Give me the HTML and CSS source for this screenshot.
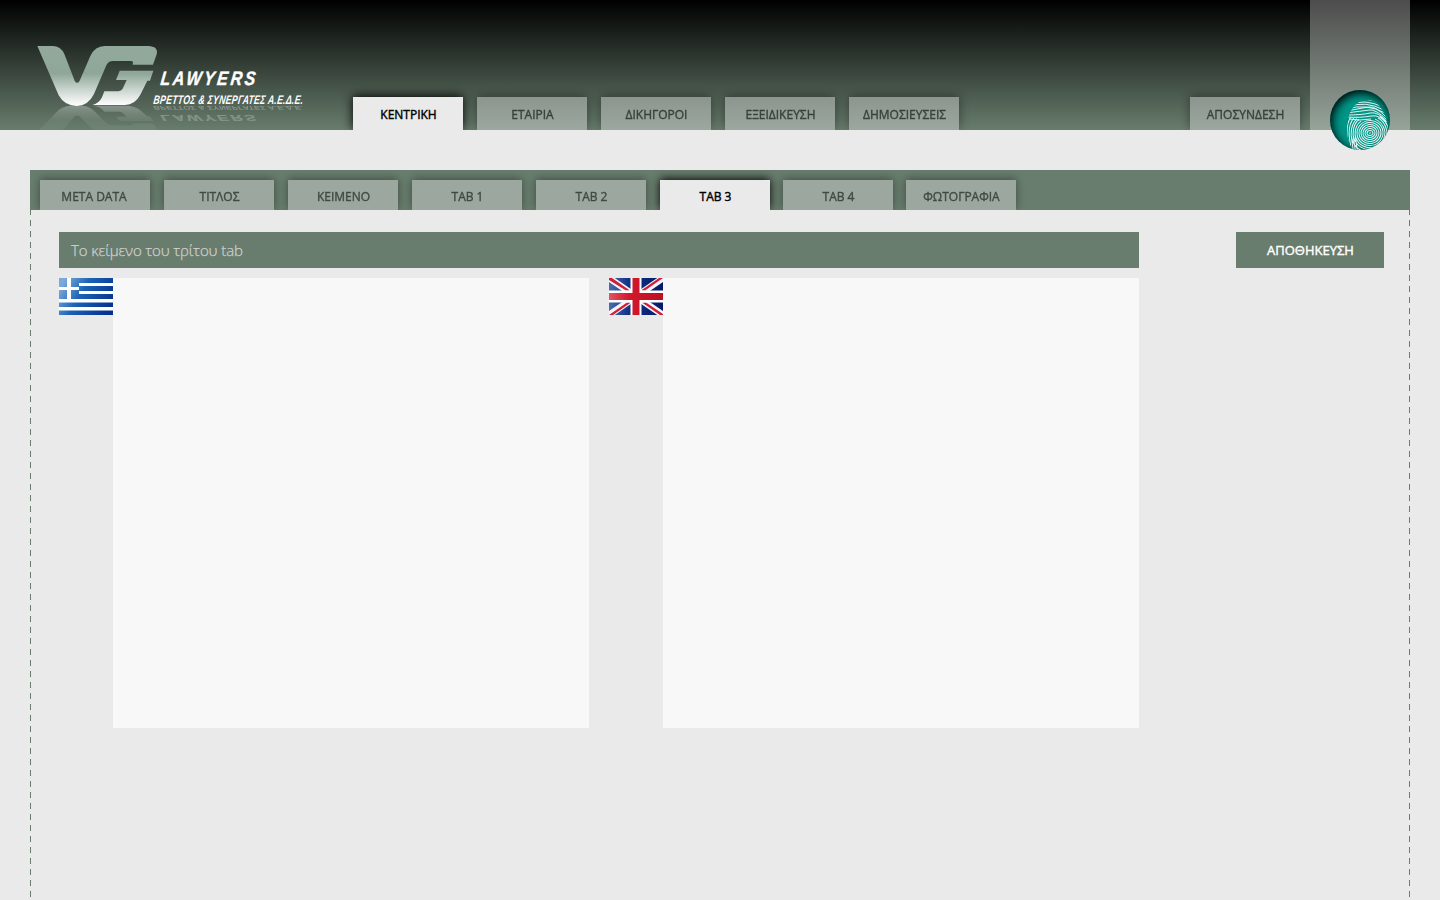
FILE: index.html
```html
<!DOCTYPE html>
<html lang="el">
<head>
<meta charset="utf-8">
<title>VG Lawyers</title>
<link rel="stylesheet" href="styles.css">
</head>
<body>
<header class="header">
  <svg class="logo" width="310" height="130" viewBox="0 0 310 130">
    <defs>
      <linearGradient id="metal" gradientUnits="userSpaceOnUse" x1="0" y1="30" x2="0" y2="210">
        <stop offset="0" stop-color="#92a99c"/><stop offset=".46" stop-color="#8fa799"/><stop offset=".62" stop-color="#b3c3b9"/><stop offset=".85" stop-color="#e3e8e5"/><stop offset="1" stop-color="#fff"/>
      </linearGradient>
      <linearGradient id="fade" gradientUnits="userSpaceOnUse" x1="0" y1="106" x2="0" y2="130">
        <stop offset="0" stop-color="#fff" stop-opacity=".3"/><stop offset="1" stop-color="#fff" stop-opacity=".16"/>
      </linearGradient>
      <mask id="mirror" maskUnits="userSpaceOnUse" x="0" y="104" width="310" height="26"><path fill="url(#fade)" d="M0 104H310V130H0Z"/></mask>
      <g id="mark" fill="#fff">
        <g fill="url(#metal)" transform="translate(30 36) scale(.33333)">
          <path d="M22 30H68Q92 30 103 54L134 134Q141 147 149 134L181 60Q195 30 224 30H354Q386 31 380 55L369 86H308L309 78Q308 75 302 75H249Q235 75 229 88L192 174Q174 210 140 210Q103 209 86 178Z"/>
          <path d="M269 104H370L360 134H352L331 176Q315 206 285 207H188Q208 201 216 184L223 166H265Q274 165 278 158L290 132H258Z"/>
        </g>
        <g class="logo-text">
          <text transform="translate(160 85) skewX(-7) scale(.82 1)" font-size="19.500" textLength="115.500" lengthAdjust="spacing" stroke="#fff" stroke-width=".4">LAWYERS</text>
          <text transform="translate(153 104) skewX(-7) scale(.7 1)" font-size="12.500" textLength="214" lengthAdjust="spacing">ΒΡΕΤΤΟΣ &amp; ΣΥΝΕΡΓΑΤΕΣ Α.Ε.Δ.Ε.</text>
        </g>
      </g>
    </defs>
    <use href="#mark"/>
    <g mask="url(#mirror)"><use href="#mark" transform="translate(0 152) scale(1 -.44)"/></g>
  </svg>
  <nav class="main-nav">
    <a class="tab active">ΚΕΝΤΡΙΚΗ</a><a class="tab">ΕΤΑΙΡΙΑ</a><a class="tab">ΔΙΚΗΓΟΡΟΙ</a><a class="tab">ΕΞΕΙΔΙΚΕΥΣΗ</a><a class="tab">ΔΗΜΟΣΙΕΥΣΕΙΣ</a>
  </nav>
  <nav class="user-nav"><a class="tab">ΑΠΟΣΥΝΔΕΣΗ</a></nav>
  <div class="user-strip">
    <div class="badge">
      <svg width="60" height="60" viewBox="0 0 60 60">
        <clipPath id="finger"><path d="M17 40C17 23 24 10 38 10C49 10 57 25 58 39Q57 47 53 52Q44 62 23 60Q17 51 17 40Z"/></clipPath>
        <clipPath id="disc"><circle cx="30" cy="30" r="30"/></clipPath>
        <g clip-path="url(#disc)"><g clip-path="url(#finger)" fill="none" stroke="#e6f5f3" stroke-width="1">
          <path d="M20 13Q35 5 51 14M19 15Q34 8 53 17M18 17Q35 10 54 20M17 19Q36 13 55 23M17 21Q32 18 39 17T56 27M16 23Q32 21 39 20T57 30M16 25Q32 25 40 23T58 33M16 27Q31 28 41 26T58 36M19 29Q30 31 41 29"/>
          <g transform="rotate(-8 40 43)"><path d="M39 43h2"/><ellipse cx="40" cy="43" rx="3" ry="2.500"/><ellipse cx="40" cy="43" rx="5" ry="4.500"/><ellipse cx="40" cy="43" rx="7" ry="6.500"/><ellipse cx="40" cy="43" rx="9" ry="8.500"/><ellipse cx="40" cy="43" rx="11" ry="10.500"/><ellipse cx="40" cy="43" rx="13" ry="12.500"/>
          <path d="M25 64V43Q26 33 33 30M23 64V43Q24 32 31 28M21 64V43Q22 32 29 27M19 64V43Q20 31 26 26M17 64V43Q18 30 23 25M25 43Q26 56 40 58Q54 56 55 43Q54 34 47 30M23 43Q24 58 40 60Q56 58 57 43Q56 33 50 29M21 44Q22 61 40 62M59 50V43Q58 32 52 28"/></g>
        </g></g>
      </svg>
    </div>
  </div>
</header>
<main class="panel">
  <nav class="sub-nav">
    <a class="tab latin">META DATA</a><a class="tab">ΤΙΤΛΟΣ</a><a class="tab">ΚΕΙΜΕΝΟ</a><a class="tab">TAB 1</a><a class="tab">TAB 2</a><a class="tab active">TAB 3</a><a class="tab tight">TAB 4</a><a class="tab tight">ΦΩΤΟΓΡΑΦΙΑ</a>
  </nav>
  <div class="content">
    <section class="editor">
      <h1 class="title">Το κείμενο του τρίτου tab</h1>
      <div class="fields">
        <div class="field">
          <svg width="54" height="37" viewBox="0 0 54 37">
            <defs><linearGradient id="aegean" x1="0" y1=".3" x2="1" y2=".7"><stop stop-color="#7ba9dc"/><stop offset=".4" stop-color="#1b62b5"/><stop offset="1" stop-color="#06318f"/></linearGradient></defs>
            <path fill="url(#aegean)" d="M0 0H54V37H0Z"/>
            <path fill="#fff" d="M20 5H54V8H20ZM20 13H54V16H20ZM0 21H54V24.500H0ZM0 29H54V32.500H0ZM8 0H12V21H8ZM0 9H20V12H0Z"/>
          </svg>
          <div class="textarea"></div>
        </div>
        <div class="field">
          <svg width="54" height="37" viewBox="0 0 54 37">
            <defs><linearGradient id="navy"><stop stop-color="#4a6db0"/><stop offset=".35" stop-color="#123488"/><stop offset="1" stop-color="#051a66"/></linearGradient>
            <linearGradient id="red"><stop stop-color="#df5663"/><stop offset=".35" stop-color="#d3192e"/><stop offset="1" stop-color="#bd1022"/></linearGradient></defs>
            <path fill="url(#navy)" d="M0 0H54V37H0Z"/>
            <path stroke="#f4f4f8" stroke-width="6.500" d="M0 0L54 37M0 37L54 0"/>
            <path fill="#ce2036" d="M0 0H3L21 12.500H17L0 2ZM50 0H54L36 12.500H32ZM18 24.500H22L4 37H0ZM33 24.500H37L54 36V37H51Z"/>
            <path fill="#fff" d="M21.500 0H32.500V37H21.500ZM0 12.500H54V24.500H0Z"/>
            <path fill="url(#red)" d="M0 15H23.500V0H30.500V15H54V22H30.500V37H23.500V22H0Z"/>
          </svg>
          <div class="textarea"></div>
        </div>
      </div>
    </section>
    <button class="save">ΑΠΟΘΗΚΕΥΣΗ</button>
  </div>
</main>
</body>
</html>
```
FILE: styles.css
```css
* { box-sizing: border-box; }
body {
  margin: 0;
  height: 900px;
  overflow: hidden;
  background: #eaeaea;
  font-family: "Open Sans", sans-serif;
}
.header {
  height: 130px;
  display: flex;
  align-items: flex-end;
  padding-right: 30px;
  background: linear-gradient(#000, #687d6d);
}
.logo { display: block; flex: none; }
.logo-text { font-family: "Liberation Sans", sans-serif; font-weight: bold; font-style: italic; }
.main-nav, .user-nav, .sub-nav { display: flex; overflow: hidden; align-items: flex-end; }
.main-nav, .user-nav { height: 50px; }
.main-nav { padding: 0 12px; margin-left: 31px; gap: 14px; }
.user-nav { margin-left: auto; padding: 0 10px; }
.tab {
  width: 110px;
  height: 33px;
  flex: none;
  padding-left: 1px;
  line-height: 36px;
  text-align: center;
  font-size: 12px;
  font-weight: 400;
  -webkit-text-stroke: .4px #000;
  color: #000;
  background: #eaeaea;
  box-shadow: 0 -1px 10px #000;
  opacity: .4;
}
.tab.latin { padding: 0 2px 0 0; }
.tab.active { opacity: 1; }
.user-strip {
  width: 100px;
  height: 130px;
  padding: 90px 20px 0;
  background: rgba(255, 255, 255, .3);
}
.badge {
  position: relative;
  width: 60px;
  height: 60px;
  border-radius: 50%;
  background: #009587;
  box-shadow: inset 2px 3px 10px #000;
}
.badge svg { display: block; }
.panel { position: relative; width: 1380px; margin: 40px auto 0; height: 730px; }
.panel::before, .panel::after {
  content: "";
  position: absolute;
  top: 39px;
  bottom: 0;
  width: 1px;
  background: repeating-linear-gradient(#687d6d 0 6px, transparent 6px 11px);
}
.panel::before { left: 0; }
.panel::after { right: 0; }
.sub-nav { height: 40px; padding-left: 10px; background: #687d6d; }
.sub-nav .tab { height: 30px; line-height: 34px; margin-right: 14px; }
.sub-nav .tab.active, .sub-nav .tab.tight { margin-right: 13px; }
.content { display: flex; justify-content: space-between; padding: 22px 26px 0 29px; }
.editor { width: 1080px; }
.title {
  margin: 0 0 10px;
  height: 36px;
  padding-left: 12px;
  line-height: 37px;
  font-size: 15px;
  font-weight: 300;
  letter-spacing: -.08px;
  -webkit-text-stroke: .25px #d0d0d0;
  color: #d0d0d0;
  background: #687d6d;
}
.fields { display: flex; gap: 20px; }
.field { display: flex; align-items: flex-start; width: 530px; }
.field svg { display: block; flex: none; }
.textarea { flex: 1; height: 450px; background: #f8f8f8; }
.save {
  width: 148px;
  height: 36px;
  border: 0;
  padding: 0 0 0 1px;
  font: 400 13px/36px "Open Sans", sans-serif;
  -webkit-text-stroke: .4px #fff;
  color: #fff;
  background: #687d6d;
}
```
